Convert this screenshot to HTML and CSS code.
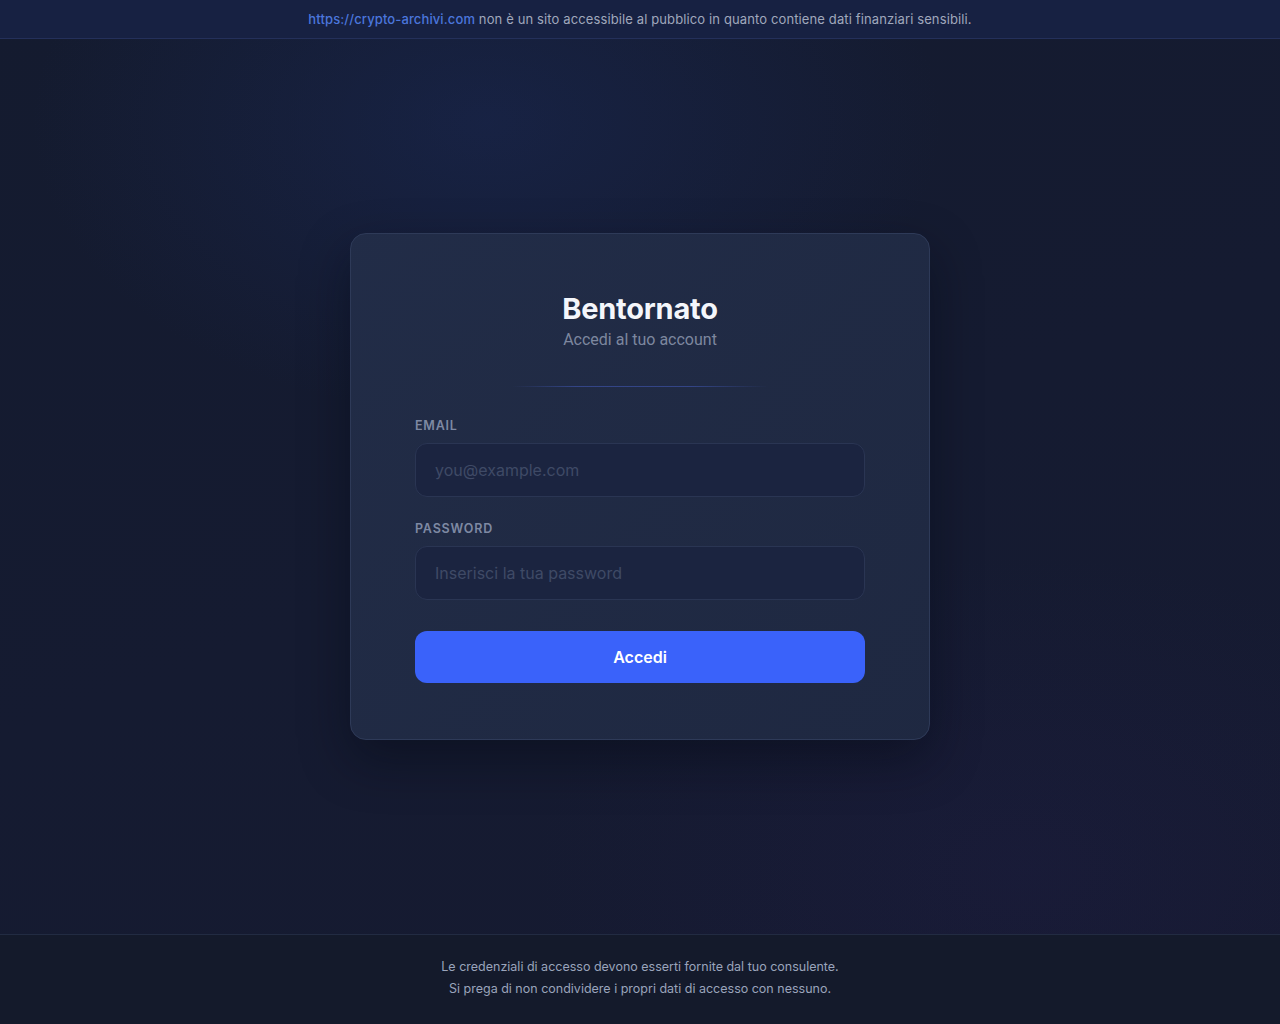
FILE: index.html
```html
<!DOCTYPE html>
<html lang="it">
<head>
<meta charset="utf-8">
<title>Accedi</title>
<link rel="stylesheet" href="styles.css">
</head>
<body>
<div class="page">
  <header class="notice">
    <p><span class="notice-link">https://crypto-archivi.com</span> non è un sito accessibile al pubblico in quanto contiene dati finanziari sensibili.</p>
  </header>
  <main class="main">
    <section class="card">
      <div class="card-head">
        <h1 class="title">Bentornato</h1>
        <p class="subtitle">Accedi al tuo account</p>
      </div>
      <div class="divider"></div>
      <form class="form">
        <label class="field">
          <span class="label">Email</span>
          <input class="input" type="email" placeholder="you@example.com">
        </label>
        <label class="field">
          <span class="label">Password</span>
          <input class="input" type="password" placeholder="Inserisci la tua password">
        </label>
        <button class="btn" type="button">Accedi</button>
      </form>
    </section>
  </main>
  <footer class="footer">
    <p>Le credenziali di accesso devono esserti fornite dal tuo consulente.</p>
    <p>Si prega di non condividere i propri dati di accesso con nessuno.</p>
  </footer>
</div>
</body>
</html>
```
FILE: styles.css
```css
* { box-sizing: border-box; }
html, body { margin: 0; padding: 0; height: 100%; }
body {
  font-family: Inter, "Noto Sans", sans-serif;
  background: #131a2c;
  color: #e6e9f2;
}
.page {
  min-height: 1024px;
  display: flex;
  flex-direction: column;
  background:
    radial-gradient(ellipse 650px 420px at 38% 12%, rgba(28, 46, 100, 0.38), transparent 70%),
    radial-gradient(ellipse 700px 450px at 80% 85%, rgba(36, 30, 80, 0.22), transparent 70%),
    linear-gradient(160deg, #141b2f 0%, #151b31 50%, #161a31 100%);
}
.notice {
  height: 39px;
  background: #172142;
  border-bottom: 1px solid #24305a;
  display: flex;
  align-items: center;
  justify-content: center;
}
.notice p {
  margin: 0;
  font-size: 13px;
  color: #a0a8bc;
  letter-spacing: 0.12px;
}
.notice-link {
  color: #4b76dc;
  font-weight: 500;
}
.main {
  flex: 1;
  display: flex;
  justify-content: center;
  align-items: flex-start;
  padding-top: 194px;
}
.card {
  width: 580px;
  background: linear-gradient(135deg, rgba(34, 45, 72, 0.95), rgba(31, 41, 66, 0.95));
  border: 1px solid #2e3a58;
  border-radius: 16px;
  padding: 56px 64px 56px;
  box-shadow: 0 20px 50px rgba(5, 8, 20, 0.45);
}
.card-head {
  text-align: center;
}
.title {
  margin: 0;
  font-size: 29px;
  font-weight: 700;
  line-height: 37px;
  color: #f4f6fb;
  letter-spacing: -0.2px;
}
.subtitle {
  margin: 1px 0 0;
  font-family: Roboto, Inter, sans-serif;
  font-size: 16px;
  line-height: 24px;
  color: #7d879f;
}
.divider {
  width: 256px;
  height: 1px;
  margin: 34px auto 31px;
  background: linear-gradient(90deg, transparent, rgba(70, 95, 200, 0.5) 25%, rgba(70, 95, 200, 0.5) 70%, transparent);
}
.form {
  display: flex;
  flex-direction: column;
}
.field {
  display: flex;
  flex-direction: column;
  margin-bottom: 24px;
}
.label {
  font-size: 12.5px;
  font-weight: 600;
  letter-spacing: 0.8px;
  text-transform: uppercase;
  color: #7e89a3;
  line-height: 16px;
  margin-bottom: 9px;
}
.input {
  height: 54px;
  width: 100%;
  border-radius: 12px;
  border: 1px solid #2a3553;
  background: #1b2440;
  padding: 0 19px;
  font-family: Inter, sans-serif;
  font-size: 16px;
  color: #e6e9f2;
  outline: none;
}
.input::placeholder { color: #3f4a66; }
.btn {
  margin-top: 7px;
  height: 52px;
  border: none;
  border-radius: 12px;
  background: #3a62fa;
  color: #ffffff;
  font-family: Inter, sans-serif;
  font-size: 16px;
  font-weight: 600;
  cursor: pointer;
}
.footer {
  height: 90px;
  border-top: 1px solid #222b42;
  background: #141a2b;
  display: flex;
  flex-direction: column;
  align-items: center;
  justify-content: center;
  gap: 6px;
  padding-bottom: 4px;
}
.footer p {
  margin: 0;
  font-size: 12.5px;
  line-height: 16px;
  color: #9aa4bb;
}
```
